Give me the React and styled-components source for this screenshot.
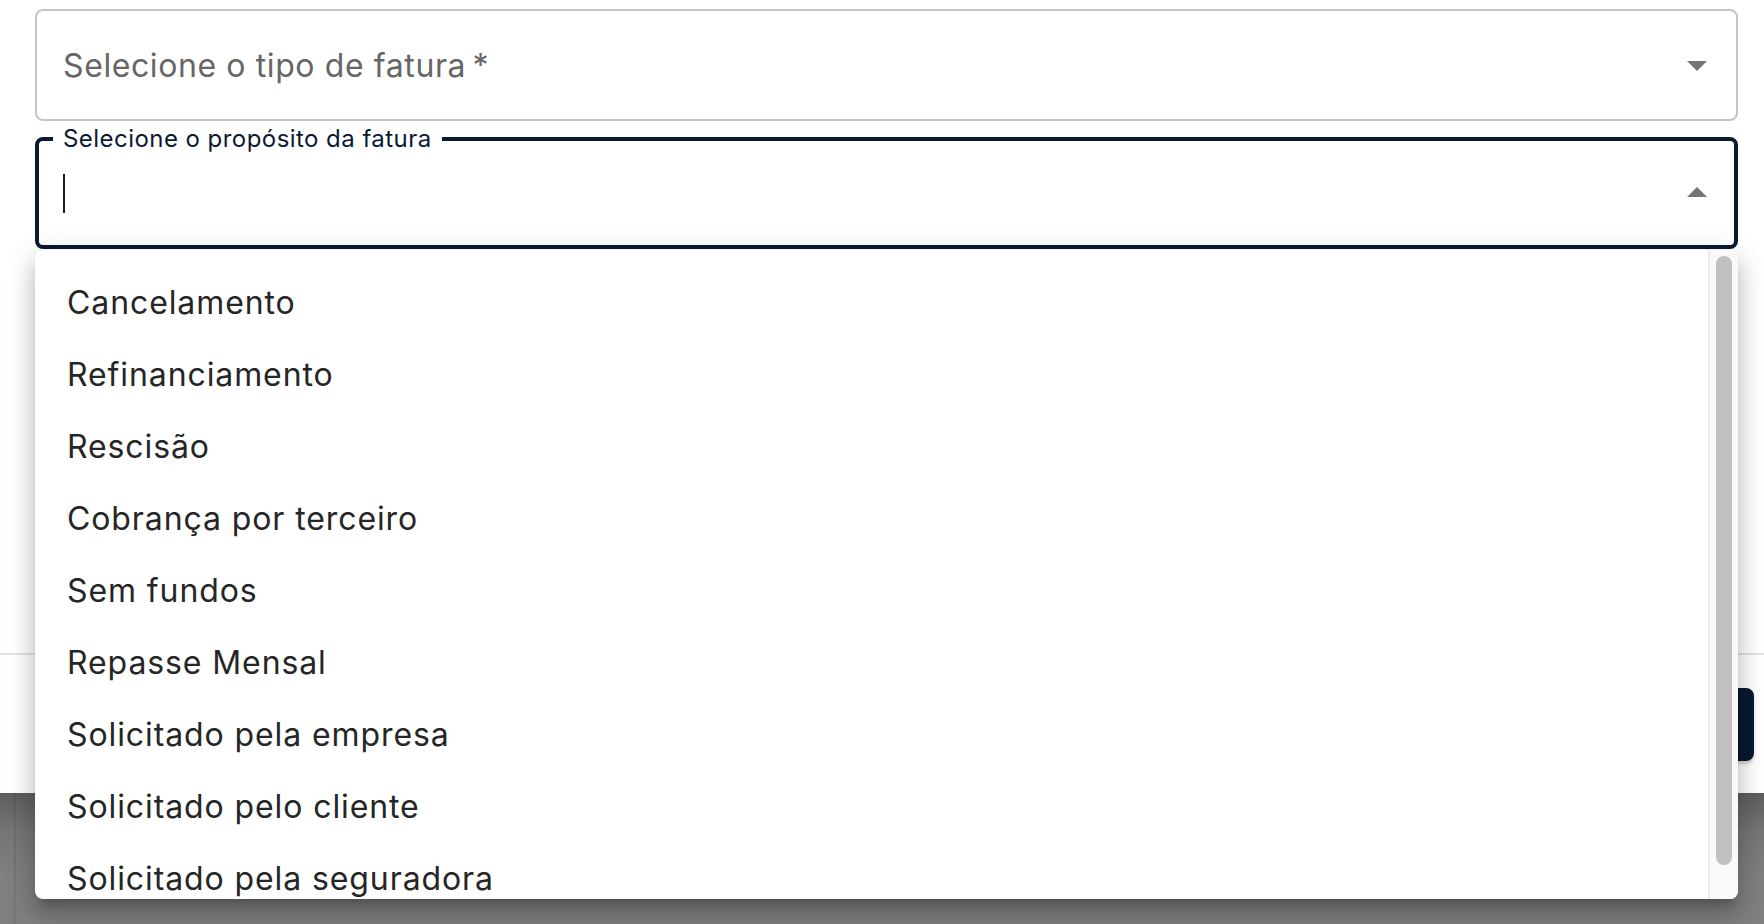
import React from 'react'
import styled, { createGlobalStyle } from 'styled-components'

const GlobalStyle = createGlobalStyle`
  html, body {
    margin: 0;
    padding: 0;
  }
  body {
    font-family: Inter, 'Noto Sans', sans-serif;
    background: #fff;
    overflow: hidden;
  }
`

const Page = styled.div`
  display: flex;
  flex-direction: column;
  height: 924px;
`

const Dialog = styled.div`
  display: flex;
  flex-direction: column;
  height: 793px;
  background: #fff;
`

const Content = styled.div`
  display: flex;
  flex-direction: column;
  gap: 16px;
  height: 653px;
  box-sizing: border-box;
  padding: 9px 26px 0 35px;
`

const Divider = styled.div`
  height: 2px;
  background: #e3e3e3;
`

const Actions = styled.div`
  display: flex;
  justify-content: flex-end;
  padding: 33px 10px 32px;
`

const PrimaryButton = styled.button`
  width: 220px;
  height: 73px;
  border: 0;
  border-radius: 8px;
  background: #0a1a33;
  color: #fff;
  font-family: inherit;
  font-size: 28px;
  box-shadow: 0 3px 3px rgba(0, 0, 0, 0.18);
`

const Backdrop = styled.div`
  flex: 1;
  background: linear-gradient(to bottom, #5e5e5e 0, #767676 40px, #7f7f7f 80px);
`

const BehindEdge = styled.div`
  height: 100%;
  margin-left: 14px;
  border-left: 2px solid rgba(0, 0, 0, 0.07);
`

const SelectBox = styled.div`
  display: flex;
  align-items: center;
  height: 112px;
  box-sizing: border-box;
  border: 2px solid #c4c4c4;
  border-radius: 8px;
  padding: 0 15px 0 26px;
`

const Placeholder = styled.span`
  flex: 1;
  font-size: 32px;
  letter-spacing: 0.6px;
  color: #666;
`

const FieldWrap = styled.div`
  position: relative;
`

const OpenBox = styled.div`
  position: relative;
  display: flex;
  align-items: center;
  height: 112px;
  box-sizing: border-box;
  border: 4px solid #0a1a33;
  border-radius: 8px;
  padding: 0 13px 0 24px;
`

const FloatLabel = styled.span`
  position: absolute;
  top: -14px;
  left: 14px;
  padding: 0 10px;
  background: #fff;
  font-size: 24px;
  line-height: 24px;
  letter-spacing: 0.45px;
  color: #0a1a33;
`

const Caret = styled.span`
  width: 2px;
  height: 39px;
  background: #1c1c1c;
`

const Grow = styled.span`
  flex: 1;
`

const Arrow = styled.svg`
  width: 48px;
  height: 48px;
  fill: #757575;
  flex: none;
`

const Menu = styled.div`
  position: absolute;
  top: calc(100% + 1px);
  left: 0;
  right: 0;
  height: 649px;
  display: flex;
  background: #fff;
  border-radius: 8px;
  overflow: hidden;
  box-shadow: 0 10px 10px -6px rgba(0, 0, 0, 0.2), 0 16px 20px 2px rgba(0, 0, 0, 0.14),
    0 6px 28px 4px rgba(0, 0, 0, 0.12);
`

const MenuList = styled.ul`
  flex: 1;
  margin: 0;
  padding: 16px 0 0;
  list-style: none;
  overflow: hidden;
`

const MenuItem = styled.li`
  display: flex;
  align-items: center;
  height: 72px;
  padding: 0 32px;
  font-size: 32px;
  letter-spacing: 0.9px;
  color: #262626;
  white-space: nowrap;
`

const ScrollTrack = styled.div`
  width: 16px;
  padding: 6px 6px 0 6px;
  background: #f9f9f9;
  border-left: 2px solid #ebebeb;
  flex: none;
  box-sizing: content-box;
`

const ScrollThumb = styled.div`
  width: 16px;
  height: ${(p) => p.$size}px;
  border-radius: 8px;
  background: #c1c1c1;
`

const purposes = [
  'Cancelamento',
  'Refinanciamento',
  'Rescisão',
  'Cobrança por terceiro',
  'Sem fundos',
  'Repasse Mensal',
  'Solicitado pela empresa',
  'Solicitado pelo cliente',
  'Solicitado pela seguradora',
]

function DropArrow({ up }) {
  return (
    <Arrow viewBox="0 0 24 24">
      <path d={up ? 'M7 14l5-5 5 5z' : 'M7 10l5 5 5-5z'} />
    </Arrow>
  )
}

export default function App() {
  return (
    <Page>
      <GlobalStyle />
      <Dialog>
        <Content>
          <SelectBox>
            <Placeholder>Selecione o tipo de fatura{'\u2009'}*</Placeholder>
            <DropArrow />
          </SelectBox>
          <FieldWrap>
            <OpenBox>
              <FloatLabel>Selecione o propósito da fatura</FloatLabel>
              <Caret />
              <Grow />
              <DropArrow up />
            </OpenBox>
            <Menu>
              <MenuList>
                {purposes.map((p) => (
                  <MenuItem key={p}>{p}</MenuItem>
                ))}
              </MenuList>
              <ScrollTrack>
                <ScrollThumb $size={609} />
              </ScrollTrack>
            </Menu>
          </FieldWrap>
        </Content>
        <Divider />
        <Actions>
          <PrimaryButton>Salvar</PrimaryButton>
        </Actions>
      </Dialog>
      <Backdrop>
        <BehindEdge />
      </Backdrop>
    </Page>
  )
}
